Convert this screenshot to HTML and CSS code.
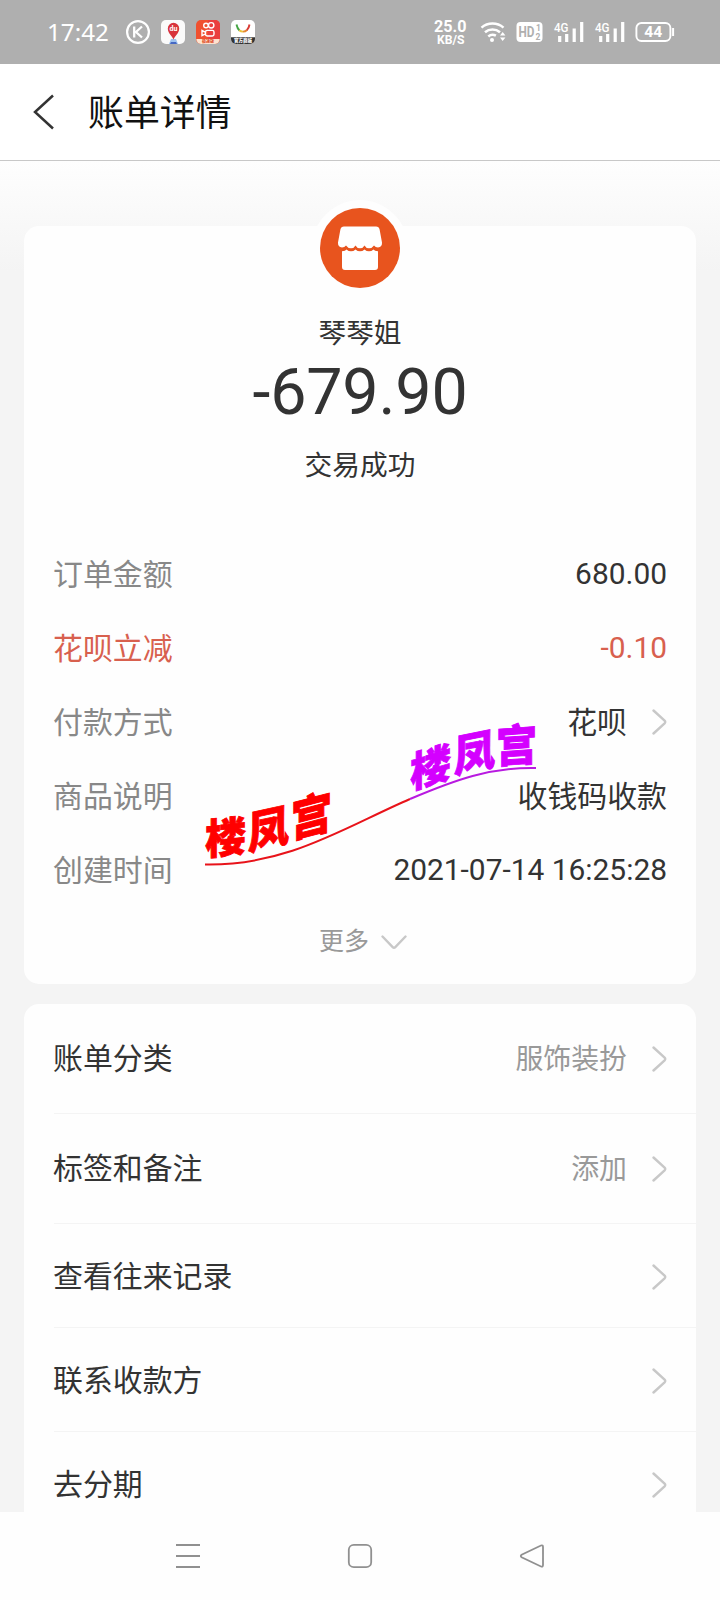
FILE: index.html
```html
<!DOCTYPE html>
<html lang="zh-CN">
<head>
<meta charset="utf-8">
<title>账单详情</title>
<link rel="stylesheet" href="styles.css">
</head>
<body>
<div class="phone">
  <header class="status">
    <span class="clock">17:42</span>
    <svg class="apps" width="132" height="26" viewBox="0 0 132 26">
      <circle cx="13" cy="13" r="10.9" fill="none" stroke="#fff" stroke-width="2.2"/>
      <path d="M9.2 7.5v11M17 7.5l-6 5.5 6 5.5" fill="none" stroke="#fff" stroke-width="2.3"/>
      <rect x="36" y="1" width="24" height="24" rx="5" fill="#fafafa"/>
      <path d="M44 25l2-5h5l2 5z" fill="#9fc3ee"/><path d="M46 23h5l1 2h-7z" fill="#4668c4"/>
      <path d="M48.500 20.500c-1.200-3.500-5.700-6-5.700-11a5.700 5.700 0 0 1 11.400 0c0 5-4.500 7.500-5.700 11z" fill="#d8343c"/>
      <text x="48.500" y="12" class="du">du</text>
      <rect x="71" y="1" width="24" height="24" rx="5" fill="#f0502f"/>
      <path d="M83 1h7a5 5 0 0 1 5 5v14H83z" fill="#ea3f3e"/>
      <path d="M71.300 20h23.400a5 5 0 0 1-4.700 5H76a5 5 0 0 1-4.700-5z" fill="#fde3cf"/>
      <text x="83" y="24.200" class="ks">极速版</text>
      <g fill="none" stroke="#fff" stroke-width="1.400"><circle cx="81" cy="6.500" r="2.300"/><circle cx="86.200" cy="6.300" r="2.700"/><rect x="80.500" y="11.400" width="8.500" height="5.600" rx="1.700"/><path d="M80 13l-3-1.500v5.200l3-1.500"/></g>
      <rect x="106" y="1" width="24" height="24" rx="5" fill="#fff"/>
      <path d="M106 18.200h24V20a5 5 0 0 1-5 5h-14a5 5 0 0 1-5-5z" fill="#333"/>
      <g fill="none" stroke-width="1.900"><path d="M111.500 5.500c.5 2.500 1.300 4.500 3 5.900" stroke="#45a545"/><path d="M114.200 11.200c1 .9 2.300 1.400 3.800 1.400" stroke="#edc13a"/><path d="M118 12.600c1.700 0 3-.6 4-1.600" stroke="#e58a32"/><path d="M121.800 11.200c1.600-1.400 2.300-3.200 2.700-5.700" stroke="#d93b35"/></g>
      <text x="118" y="23.400" class="shop">官方商城</text>
    </svg>
    <span class="grow"></span>
    <svg class="speed" width="36" height="28" viewBox="0 0 36 28">
      <text x="1" y="13.500" class="rate" textLength="32.500" lengthAdjust="spacingAndGlyphs">25.0</text>
      <text x="4" y="25.500" class="unit" textLength="27.500" lengthAdjust="spacingAndGlyphs">KB/S</text>
    </svg>
    <svg class="signals" width="196" height="24" viewBox="0 0 196 24">
      <g fill="none" stroke="#fff" stroke-width="2.500"><path d="M1.500 7.600a17 17 0 0 1 22 0M5 12.300a11.500 11.500 0 0 1 15 0M8.300 16.500a6.600 6.600 0 0 1 7.600-.8"/></g>
      <circle cx="12" cy="20" r="2" fill="#fff"/>
      <path d="M20 15.400l2.700-3.400 2.700 3.400zM20 17.600l2.700 3.400 2.700-3.400z" fill="#fff"/>
      <rect x="36.500" y="2" width="26" height="20" rx="4" fill="#fff"/>
      <text x="38.500" y="17.300" class="hd" textLength="16" lengthAdjust="spacingAndGlyphs">HD</text>
      <text x="56" y="11" class="tiny">1</text><text x="55.500" y="20" class="tiny">2</text>
      <text x="74" y="12" class="gen" textLength="14.500" lengthAdjust="spacingAndGlyphs">4G</text>
      <path d="M79.700 16v6M86.700 14v8M94.200 8.500v13.500M101.700 2v20" stroke="#fff" stroke-width="3.200"/>
      <text x="115" y="12" class="gen" textLength="14.500" lengthAdjust="spacingAndGlyphs">4G</text>
      <path d="M120.700 16v6M127.700 14v8M135.200 8.500v13.500M142.700 2v20" stroke="#fff" stroke-width="3.200"/>
      <rect x="156.400" y="3" width="34" height="18" rx="5" fill="none" stroke="#fff" stroke-width="1.900"/>
      <path d="M193.100 8v8" stroke="#fff" stroke-width="2"/>
      <text x="173.300" y="17" class="batt" textLength="18" lengthAdjust="spacingAndGlyphs">44</text>
    </svg>
  </header>

  <div class="titlebar">
    <svg width="22" height="36" viewBox="0 0 22 36"><path d="M20 1.500L2 18l18 16.500" fill="none" stroke="#333" stroke-width="2.500"/></svg>
    <h1>账单详情</h1>
  </div>

  <main class="content">
    <section class="card bill">
      <div class="avatar">
        <svg width="80" height="80" viewBox="0 0 80 80"><circle cx="40" cy="40" r="40" fill="#e8541e"/><path d="M24 18.500h32q3 0 3.600 3L62 34.500q.3 4.500-4 4.900-2.500 0-4-2-2 2.900-5 2.900t-4.500-2.900q-1.500 2.900-4.500 2.900t-4.500-2.900q-1.500 2.900-4.500 2.900t-5-2.900q-1.500 2-4 2-4.300-.4-4-4.900l2.400-13q.6-3 3.600-3z" fill="#fff"/><path d="M22 43.200q3.500 0 4.500-1.800 2 1.900 4.500 1.900t4.500-1.900q2 1.900 4.500 1.900t4.500-1.900q2 1.900 4.500 1.900t4.500-1.900q1 1.800 4.500 1.800V59q0 3-3 3H25q-3 0-3-3z" fill="#fff"/></svg>
      </div>
      <div class="payee">琴琴姐</div>
      <div class="amount">-679.90</div>
      <div class="state">交易成功</div>
      <dl class="details">
        <div class="line"><dt>订单金额</dt><dd class="num">680.00</dd></div>
        <div class="line promo"><dt>花呗立减</dt><dd class="num">-0.10</dd></div>
        <div class="line"><dt>付款方式</dt><dd>花呗<svg class="chev" width="15" height="26" viewBox="0 0 15 26"><path d="M1.500 1.500L12.600 11.700q1.300 1.300 0 2.600L1.500 24.500"/></svg></dd></div>
        <div class="line"><dt>商品说明</dt><dd>收钱码收款</dd></div>
        <div class="line"><dt>创建时间</dt><dd class="num">2021-07-14 16:25:28</dd></div>
      </dl>
      <div class="more">更多<svg class="chev" width="26" height="15" viewBox="0 0 26 15"><path d="M1.500 1.500L11.700 12.100q1.300 1.300 2.600 0L24.500 1.500"/></svg></div>
    </section>

    <section class="card menu">
      <div class="item tall"><span>账单分类</span><em>服饰装扮</em><svg class="chev" width="15" height="26" viewBox="0 0 15 26"><path d="M1.500 1.500L12.600 11.700q1.300 1.300 0 2.600L1.500 24.500"/></svg></div>
      <div class="item tall"><span>标签和备注</span><em>添加</em><svg class="chev" width="15" height="26" viewBox="0 0 15 26"><path d="M1.500 1.500L12.600 11.700q1.300 1.300 0 2.600L1.500 24.500"/></svg></div>
      <div class="item"><span>查看往来记录</span><svg class="chev" width="15" height="26" viewBox="0 0 15 26"><path d="M1.500 1.500L12.600 11.700q1.300 1.300 0 2.600L1.500 24.500"/></svg></div>
      <div class="item"><span>联系收款方</span><svg class="chev" width="15" height="26" viewBox="0 0 15 26"><path d="M1.500 1.500L12.600 11.700q1.300 1.300 0 2.600L1.500 24.500"/></svg></div>
      <div class="item"><span>去分期</span><svg class="chev" width="15" height="26" viewBox="0 0 15 26"><path d="M1.500 1.500L12.600 11.700q1.300 1.300 0 2.600L1.500 24.500"/></svg></div>
    </section>
  </main>

  <nav class="nav">
    <svg width="26" height="26" viewBox="0 0 26 26"><path d="M1 2h24M1 13h24M1 24h24"/></svg>
    <svg width="26" height="26" viewBox="0 0 26 26"><rect x="1.800" y="1.800" width="22.400" height="22.400" rx="5"/></svg>
    <svg width="26" height="26" viewBox="0 0 26 26"><path d="M22 2.500L2.600 11.700q-1.600 1.300 0 2.600L22 23.500q2 .6 2-1.500V4q0-2.100-2-1.500z"/></svg>
  </nav>

  <svg class="stamp" width="350" height="185" viewBox="200 695 350 185">
    <path d="M205 864.500C288 866 345 827 410 799" fill="none" stroke="#e8131a" stroke-width="2"/>
    <path d="M410 799C455 780 490 767 536 768" fill="none" stroke="#b81ae0" stroke-width="2"/>
    <g fill="#f00" stroke="#f00">
      <text transform="matrix(1,-.10,0,1.02,205,855)">楼</text>
      <text transform="matrix(1,-.22,0,1.08,248,850)">凤</text>
      <text transform="matrix(1,-.26,0,1.12,291,838)">宫</text>
    </g>
    <g fill="#d400ff" stroke="#d400ff">
      <text transform="matrix(1,-.30,0,1.02,410,789)">楼</text>
      <text transform="matrix(1,-.20,0,1.06,454,773)">凤</text>
      <text transform="matrix(1,-.07,0,1.08,496,763)">宫</text>
    </g>
  </svg>
</div>
</body>
</html>
```

FILE: styles.css
```css
* { box-sizing: border-box; margin: 0; padding: 0; }
body {
  width: 720px;
  height: 1600px;
  overflow: hidden;
  background: #fefefe;
  font-family: Roboto, "Noto Sans CJK SC", sans-serif;
  color: #333;
}
svg { display: block; flex: none; }
.phone { position: relative; display: flex; flex-direction: column; height: 1600px; }

.status {
  height: 64px;
  padding: 0 44px 0 47px;
  display: flex;
  align-items: center;
  background: #afafaf;
  color: #fff;
}
.clock { width: 78px; font: 24.200px/64px "Noto Sans", sans-serif; }
.grow { flex: 1; }
.speed { margin-right: 11px; }
.status text { font-family: Roboto, "Noto Sans CJK SC", sans-serif; }
.rate { font-size: 16px; font-weight: 700; fill: #fff; }
.unit { font-size: 13px; font-weight: 700; fill: #fff; }
.du { font-size: 7px; font-weight: 700; fill: #fff; text-anchor: middle; }
.ks { font-size: 4px; font-weight: 900; fill: #e0552f; text-anchor: middle; }
.shop { font-size: 4.500px; font-weight: 900; fill: #fff; text-anchor: middle; }
.hd { font-size: 15px; font-weight: 700; fill: #afafaf; }
.tiny { font-size: 8.500px; font-weight: 700; fill: #afafaf; }
.gen { font-size: 13.500px; font-weight: 500; fill: #fff; }
.batt { font-size: 14px; font-weight: 700; fill: #fff; text-anchor: middle; }

.titlebar {
  height: 97px;
  padding: 0 0 0 33px;
  display: flex;
  align-items: center;
  gap: 33px;
  background: #fff;
  border-bottom: 1px solid #c8c8c8;
}
.titlebar h1 { padding-top: 3px; font-size: 35.900px; font-weight: 400; line-height: 52px; color: #111; }

.content {
  height: 1351px;
  padding: 65px 24px 0;
  display: flex;
  flex-direction: column;
  gap: 20px;
  overflow: hidden;
  background: linear-gradient(#fefefe, #f4f4f4 110px);
}
.card { background: #fefefe; border-radius: 15px; flex: none; }
.bill { height: 758px; display: flex; flex-direction: column; align-items: center; }
.avatar { margin-top: -26px; padding: 8px; border-radius: 50%; background: #fefefe; }
.payee { margin-top: 18px; font-size: 27.700px; line-height: 40px; }
.amount { font-size: 64.600px; line-height: 76px; letter-spacing: -.2px; }
.state { margin-top: 16px; font-size: 27.700px; line-height: 40px; }
.details { align-self: stretch; margin-top: 49px; padding: 0 29px; }
.line { height: 74px; display: flex; justify-content: space-between; align-items: center; font-size: 29.900px; }
.line dt { color: #888; }
.line dd { display: flex; align-items: center; gap: 25px; }
.line .num { padding-top: 2px; }
.line .chev { margin-top: 3px; }
.promo dt, .promo dd { color: #d8604e; }
.chev path { fill: none; stroke: #c8c8c8; stroke-width: 2.400; stroke-linecap: round; }
.more { margin: 19px 0 0 6px; display: flex; align-items: center; gap: 12px; font-size: 25px; line-height: 36px; color: #999; }

.item { height: 104px; margin-left: 30px; padding-right: 29px; display: flex; align-items: center; border-bottom: 1px solid #f4f4f4; font-size: 29.900px; }
.item.tall { height: 110px; }
.item span { flex: 1; margin-left: -1px; padding-bottom: 3px; }
.item.tall span { padding-bottom: 5px; }
.item em { margin-right: 25px; padding-bottom: 3px; font-size: 27.900px; font-style: normal; color: #999; }
.item .chev { margin-top: 3px; }
.item.tall .chev { margin-top: 1px; }

.nav { height: 88px; padding: 0 175px; display: flex; align-items: center; justify-content: space-between; background: #fefefe; }
.nav path, .nav rect { fill: none; stroke: #909090; stroke-width: 1.800; }

/* Lettering that follows the curve, over the details */
.stamp { position: absolute; left: 200px; top: 695px; }
.stamp text { font: 900 41px/1 "Noto Sans CJK SC", sans-serif; stroke-width: .8px; }
```
